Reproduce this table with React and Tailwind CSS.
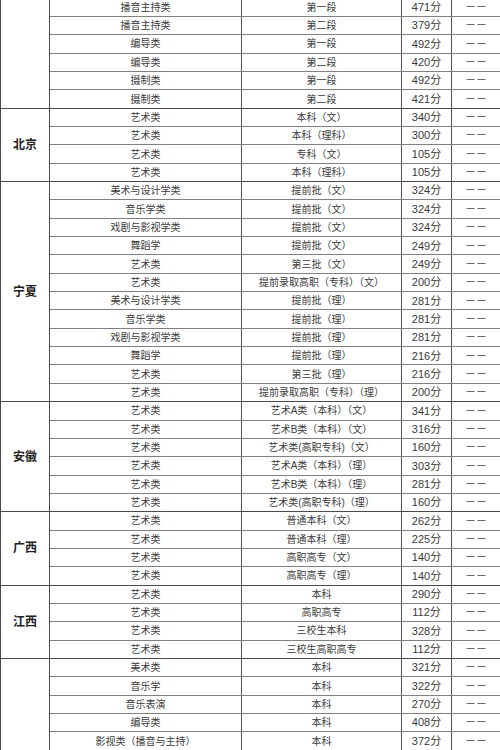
const groups = [
  {
    name: '',
    rows: [
      ['播音主持类', '第一段', '471分'],
      ['播音主持类', '第二段', '379分'],
      ['编导类', '第一段', '492分'],
      ['编导类', '第二段', '420分'],
      ['摄制类', '第一段', '492分'],
      ['摄制类', '第二段', '421分'],
    ],
  },
  {
    name: '北京',
    rows: [
      ['艺术类', '本科（文）', '340分'],
      ['艺术类', '本科（理科）', '300分'],
      ['艺术类', '专科（文）', '105分'],
      ['艺术类', '本科（理科）', '105分'],
    ],
  },
  {
    name: '宁夏',
    rows: [
      ['美术与设计学类', '提前批（文）', '324分'],
      ['音乐学类', '提前批（文）', '324分'],
      ['戏剧与影视学类', '提前批（文）', '324分'],
      ['舞蹈学', '提前批（文）', '249分'],
      ['艺术类', '第三批（文）', '249分'],
      ['艺术类', '提前录取高职（专科）（文）', '200分'],
      ['美术与设计学类', '提前批（理）', '281分'],
      ['音乐学类', '提前批（理）', '281分'],
      ['戏剧与影视学类', '提前批（理）', '281分'],
      ['舞蹈学', '提前批（理）', '216分'],
      ['艺术类', '第三批（理）', '216分'],
      ['艺术类', '提前录取高职（专科）（理）', '200分'],
    ],
  },
  {
    name: '安徽',
    rows: [
      ['艺术类', '艺术A类（本科）（文）', '341分'],
      ['艺术类', '艺术B类（本科）（文）', '316分'],
      ['艺术类', '艺术类(高职专科)（文）', '160分'],
      ['艺术类', '艺术A类（本科）（理）', '303分'],
      ['艺术类', '艺术B类（本科）（理）', '281分'],
      ['艺术类', '艺术类(高职专科)（理）', '160分'],
    ],
  },
  {
    name: '广西',
    rows: [
      ['艺术类', '普通本科（文）', '262分'],
      ['艺术类', '普通本科（理）', '225分'],
      ['艺术类', '高职高专（文）', '140分'],
      ['艺术类', '高职高专（理）', '140分'],
    ],
  },
  {
    name: '江西',
    rows: [
      ['艺术类', '本科', '290分'],
      ['艺术类', '高职高专', '112分'],
      ['艺术类', '三校生本科', '328分'],
      ['艺术类', '三校生高职高专', '112分'],
    ],
  },
  {
    name: '',
    rows: [
      ['美术类', '本科', '321分'],
      ['音乐学', '本科', '322分'],
      ['音乐表演', '本科', '270分'],
      ['编导类', '本科', '408分'],
      ['影视类（播音与主持）', '本科', '372分'],
    ],
  },
]

function Row({ r, last }) {
  return (
    <div className={`flex h-[18.35px] border-b ${last ? 'border-[#4a4a4a]' : 'border-[#808080]'}`}>
      <div className="w-[192px] shrink-0 flex items-center justify-center border-r border-[#555] text-[10px]">{r[0]}</div>
      <div className="w-[160px] shrink-0 flex items-center justify-center border-r border-[#555] text-[10px]">{r[1]}</div>
      <div className="w-[50px] shrink-0 flex items-center justify-center border-r border-[#555] text-[11px]">{r[2]}</div>
      <div className="flex-1 flex items-center justify-center text-[11px] text-[#444]">－－</div>
    </div>
  )
}

export default function App() {
  return (
    <div className="w-[500px] h-[750px] overflow-hidden bg-white text-[#3a3a3a] font-[family-name:'Liberation_Sans','Noto_Sans_CJK_SC',sans-serif]">
      <div className="mt-[-1.4px]">
        {groups.map((g, gi) => (
          <div key={gi} className="flex">
            <div className="w-[50px] shrink-0 flex items-center justify-center border-l border-r border-b border-[#4a4a4a] text-[12px] font-bold text-[#222]">
              {g.name}
            </div>
            <div className="flex-1 flex flex-col">
              {g.rows.map((r, i) => <Row key={i} r={r} last={i === g.rows.length - 1} />)}
            </div>
          </div>
        ))}
      </div>
    </div>
  )
}
